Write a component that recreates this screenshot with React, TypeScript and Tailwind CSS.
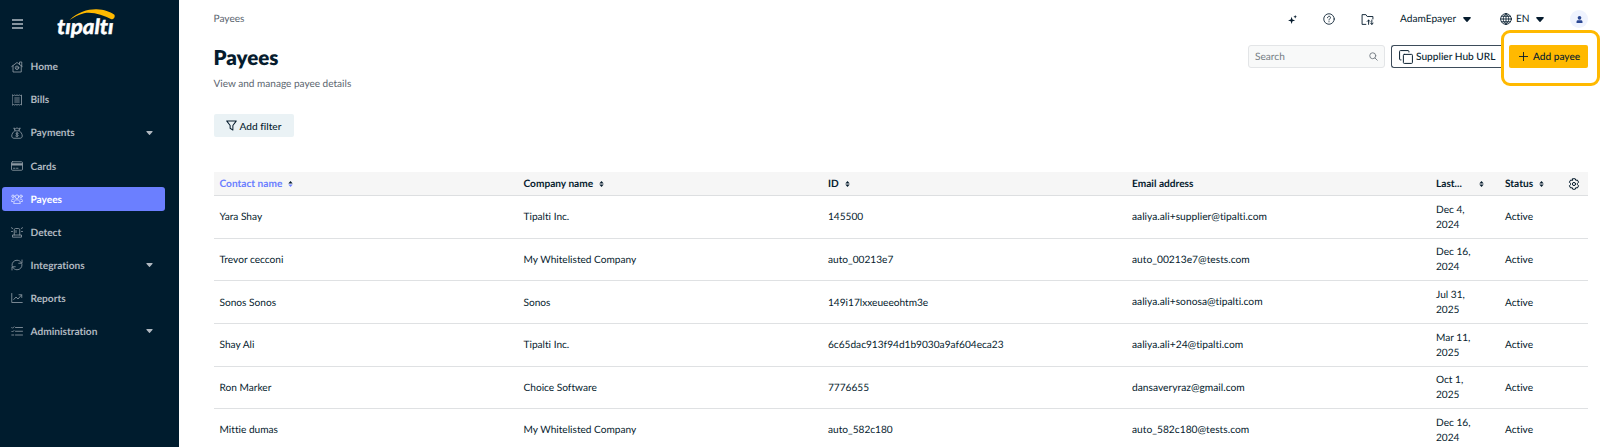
import React from "react";
import { clsx } from "clsx";

type IconProps = { className?: string };

interface NavEntry {
  label: string;
  icon: React.FC<IconProps>;
  expandable?: boolean;
  active?: boolean;
}

interface Payee {
  name: string;
  company: string;
  id: string;
  email: string;
  date: [string, string];
  status: string;
}

function Svg({ className, children }: { className?: string; children: React.ReactNode }) {
  return (
    <svg
      viewBox="0 0 24 24"
      fill="none"
      stroke="currentColor"
      strokeWidth="1.7"
      strokeLinecap="round"
      strokeLinejoin="round"
      className={clsx("shrink-0", className)}
    >
      {children}
    </svg>
  );
}

const HomeIcon = ({ className }: IconProps) => (
  <Svg className={className}>
    <path d="M1.500 11 12 3l10.500 8M4 9.500V22h16.500V9.500M17 6.500V2h4.500v8" />
    <circle cx="12" cy="13.500" r="3.500" />
    <path d="M12 12.500v2" />
  </Svg>
);

const BillsIcon = ({ className }: IconProps) => (
  <Svg className={className}>
    <path d="M3 2l2 1 2-1 2.500 1L12 2l2.500 1L17 2l2 1 2-1v20l-2-1-2 1-2.500-1-2.500 1-2.500-1L7 22l-2-1-2 1z" />
    <path d="M7.500 8h9M7.500 12h9M7.500 16h9" />
  </Svg>
);

const MoneyIcon = ({ className }: IconProps) => (
  <Svg className={className}>
    <path d="M8 7 5.500 2l4 1.500L12 1.500l2.500 2 4-1.500L16 7zM8 7C4 10 1.500 14 1.500 18c0 3 2 4.500 4.500 4.500h12c2.500 0 4.500-1.500 4.500-4.500 0-4-2.500-8-6.500-11" />
    <path d="M14.500 12.500c-1-1-4.500-1-4.500 1s4.500 1.500 4.500 3.500-3.500 2-5 1M12 10.500v9" />
  </Svg>
);

const CardIcon = ({ className }: IconProps) => (
  <Svg className={className}>
    <rect x="1" y="3.500" width="22" height="17" rx="2" />
    <path d="M1.500 7.500h21M1.500 9.500h21" strokeWidth="2.500" />
    <path d="M5 16.500h3M11 16.500h3" />
  </Svg>
);

const PeopleIcon = ({ className }: IconProps) => (
  <Svg className={className}>
    <circle cx="12" cy="7.500" r="3.700" />
    <path d="M5.500 20.500c0-4.500 2.500-7 6.500-7s6.500 2.500 6.500 7z" />
    <circle cx="4" cy="6.500" r="2.500" />
    <circle cx="20" cy="6.500" r="2.500" />
    <path d="M.500 16.500c0-3 1.500-5 5.500-4.500M23.500 16.500c0-3-1.500-5-5.500-4.500M2 17h2M20 17h2" />
  </Svg>
);

const AlarmIcon = ({ className }: IconProps) => (
  <Svg className={className}>
    <path d="M6.500 18V7.500c0-1.500 1-2.500 2.500-2.500h6c1.500 0 2.500 1 2.500 2.500V18M3 21.500V18h18v3.500z" />
    <path d="M10 9v4M.800 3.500 3.500 5M23.200 3.500 20.500 5M1 11h2M21 11h2" />
  </Svg>
);

const SyncIcon = ({ className }: IconProps) => (
  <Svg className={className}>
    <path d="M2 13C1.500 7 6 2.500 12 2.500c4 0 7 2 9 5.500M22 2v6.500h-6.500M22 11c.500 6-4 10.500-10 10.500-4 0-7-2-9-5.500M2 22v-6.500h6.500" />
  </Svg>
);

const ReportsIcon = ({ className }: IconProps) => (
  <Svg className={className}>
    <path d="M1.500 3v18h21M5.500 15l4.500-5 4 4 7-8M16 5.500h5.500V11" />
  </Svg>
);

const ChecklistIcon = ({ className }: IconProps) => (
  <Svg className={className}>
    <path d="M9 5h14M9 12.500h14M9 20h14M1.500 5l1.500 1.500L6 3.500M1.500 12.500 3 14l3-3M1.500 20h4" />
  </Svg>
);

function Caret({ className }: IconProps) {
  return (
    <svg viewBox="0 0 8 5" className={clsx("shrink-0", className)} fill="currentColor">
      <path d="M.900 0h6.200c.700 0 1 .700.500 1.200L4.500 4.700c-.300.300-.700.300-1 0L.400 1.200C-.100.700.200 0 .900 0z" />
    </svg>
  );
}

function SortIcon({ active }: { active?: boolean }) {
  return (
    <svg viewBox="0 0 6 8" className="-mt-[1px] h-[8px] w-[5px] shrink-0">
      <path d="M3 .300 5.600 3.300H.400z" fill="#061c2e" />
      <path d="M3 7.500 5.600 4.500H.400z" fill={active ? "#6b7fff" : "#061c2e"} />
    </svg>
  );
}

function Logo() {
  return (
    <svg viewBox="0 0 60 32" className="h-[32px] w-[60px]">
      <path d="M13.500 12C22 3.900 32 1 40.500 1.200c8 .300 13 2.300 17.900 5.500 1 2.300-.600 4.700-3 4.500C47 7 37 3.500 28 5.200c-5.500 1.200-10 3.800-14.500 6.800z" fill="#ffb900" />
      <text
        x="1"
        y="25.500"
        fill="#fff"
        fontSize="21"
        fontStyle="italic"
        fontWeight="700"
        fontFamily="Lato, sans-serif"
        stroke="#fff"
        strokeWidth="0.5"
        textLength="56.500"
        lengthAdjust="spacingAndGlyphs"
      >
        tıpaltı
      </text>
    </svg>
  );
}

const navItems: NavEntry[] = [
  { label: "Home", icon: HomeIcon },
  { label: "Bills", icon: BillsIcon },
  { label: "Payments", icon: MoneyIcon, expandable: true },
  { label: "Cards", icon: CardIcon },
  { label: "Payees", icon: PeopleIcon, active: true },
  { label: "Detect", icon: AlarmIcon },
  { label: "Integrations", icon: SyncIcon, expandable: true },
  { label: "Reports", icon: ReportsIcon },
  { label: "Administration", icon: ChecklistIcon, expandable: true },
];

const payees: Payee[] = [
  { name: "Yara Shay", company: "Tipalti Inc.", id: "145500", email: "aaliya.ali+supplier@tipalti.com", date: ["Dec 4,", "2024"], status: "Active" },
  { name: "Trevor cecconi", company: "My Whitelisted Company", id: "auto_00213e7", email: "auto_00213e7@tests.com", date: ["Dec 16,", "2024"], status: "Active" },
  { name: "Sonos Sonos", company: "Sonos", id: "149i17lxxeueeohtm3e", email: "aaliya.ali+sonosa@tipalti.com", date: ["Jul 31,", "2025"], status: "Active" },
  { name: "Shay Ali", company: "Tipalti Inc.", id: "6c65dac913f94d1b9030a9af604eca23", email: "aaliya.ali+24@tipalti.com", date: ["Mar 11,", "2025"], status: "Active" },
  { name: "Ron Marker", company: "Choice Software", id: "7776655", email: "dansaveryraz@gmail.com", date: ["Oct 1,", "2025"], status: "Active" },
  { name: "Mittie dumas", company: "My Whitelisted Company", id: "auto_582c180", email: "auto_582c180@tests.com", date: ["Dec 16,", "2024"], status: "Active" },
];

const gridCols = "grid shrink-0 grid-cols-[304px_304.500px_304px_304px_69px_1fr] pl-[6px]";

function Sidebar() {
  return (
    <aside className="flex h-[447px] w-[179px] shrink-0 flex-col bg-[#001c2e]">
      <div className="flex h-[50.500px] shrink-0 items-start pl-[12px]">
        <svg viewBox="0 0 11 10" className="mt-[19px] h-[10px] w-[11px]" stroke="#b3bcc5" strokeWidth="1.500">
          <path d="M0 1h11M0 5h11M0 9h11" />
        </svg>
        <div className="mt-[8px] ml-[33px]">
          <Logo />
        </div>
      </div>
      <nav className="flex flex-col">
        {navItems.map(({ label, icon: Icon, expandable, active }) => (
          <div key={label} className="flex h-[33.060px] items-center pl-[2px]">
            <div
              className={clsx(
                "flex h-[24px] w-[163px] items-center rounded-[3px] pr-[12px] pl-[9px]",
                active ? "bg-[#6b7fff] text-white" : "text-[#b0b8c0]"
              )}
            >
              <Icon className="h-[12px] w-[12px] opacity-80" />
              <span className="ml-[7.500px] flex-1 pt-[2px] font-bold">{label}</span>
              {expandable && <Caret className="h-[4px] w-[7px]" />}
            </div>
          </div>
        ))}
      </nav>
    </aside>
  );
}

function TopBar() {
  return (
    <div className="flex h-[38px] shrink-0 items-center">
      <span className="flex-1 pt-[2px] text-[#5c6670]">Payees</span>
      <svg viewBox="0 0 10 10" className="mr-[26px] h-[9px] w-[9px]" fill="#061c2e">
        <path d="M4 2 5 5l3 1-3 1-1 3-1-3-3-1 3-1zM8 0l.600 1.500L10 2l-1.400.600L8 4l-.600-1.400L6 2l1.400-.500z" />
      </svg>
      <Svg className="mr-[26px] h-[12px] w-[12px]">
        <circle cx="12" cy="12" r="10.500" />
        <path d="M9 9.500c0-4 6-4 6-.500 0 2.500-3 2.500-3 5M12 17.300v.400" />
      </Svg>
      <Svg className="mr-[26px] h-[13px] w-[13px]">
        <path d="M9 21H2V3h7l2.500 3.500H22V11" />
        <path d="M14 21v-8M11.500 15.500 14 13l2.500 2.500M20 13v8M17.500 18.500 20 21l2.500-2.500" />
      </Svg>
      <span className="w-[57px] pt-[2px]">AdamEpayer</span>
      <Caret className="mr-[29px] ml-[6px] h-[5px] w-[8px]" />
      <Svg className="mr-[4px] h-[12px] w-[12px]">
        <circle cx="12" cy="12" r="10.700" />
        <path d="M12 1v22M1 12h22M3 6.500h18M3 17.500h18M12 1C4.500 7 4.500 17 12 23M12 1c7.500 6 7.500 16 0 22" />
      </Svg>
      <span className="w-[14px] pt-[2px]">EN</span>
      <Caret className="mr-[26px] ml-[6px] h-[5px] w-[8px]" />
      <div className="flex h-[18px] w-[18px] items-center justify-center rounded-full bg-[#eff3fe]">
        <svg viewBox="0 0 8 8" className="h-[7px] w-[7px]" fill="#2b4793">
          <circle cx="4" cy="2.100" r="2.100" />
          <path d="M.600 7.900V6.500c0-1.300.900-1.700 2-1.700h2.800c1.100 0 2 .400 2 1.700v1.400z" />
        </svg>
      </div>
    </div>
  );
}

function PageHeader() {
  return (
    <div className="flex h-[76px] shrink-0 items-start justify-between">
      <div>
        <h1 className="mt-[7px] text-[20.500px] leading-[26px] font-extrabold">Payees</h1>
        <p className="mt-[6px] text-[10.050px] leading-[14px] text-[#5c6670]">View and manage payee details</p>
      </div>
      <div className="mt-[7px] flex items-center">
        <div className="flex h-[23px] w-[137px] items-center justify-between rounded-[3px] border border-[#e3e5e7] bg-[#f8f9f9] pr-[6px] pl-[6px] text-[#757d84]">
          <span className="pt-[2px]">Search</span>
          <Svg className="h-[9px] w-[9px]">
            <circle cx="10" cy="10" r="8" strokeWidth="2.500" />
            <path d="m16 16 6 6" strokeWidth="2.500" />
          </Svg>
        </div>
        <div className="ml-[6px] flex h-[23px] w-[111px] items-center rounded-l-[3px] border border-r-0 border-[#3d4c5a] pl-[7px]">
          <Svg className="h-[14px] w-[14px]">
            <rect x="7.500" y="7.500" width="15.500" height="15.500" rx="1.500" />
            <path d="M3.500 17H2.500A1.500 1.500 0 0 1 1 15.500v-13A1.500 1.500 0 0 1 2.500 1h13A1.500 1.500 0 0 1 17 2.500v1" />
          </Svg>
          <span className="ml-[3px] pt-[2px] font-medium whitespace-nowrap">Supplier Hub URL</span>
        </div>
        <div className="relative ml-[7px] flex h-[23px] w-[79px] items-center rounded-[2px] bg-[#ffb900] pl-[10px]">
          <Svg className="h-[9px] w-[9px]">
            <path d="M12 1v22M1 12h22" strokeWidth="2.400" />
          </Svg>
          <span className="ml-[5px] pt-[2px] font-medium whitespace-nowrap">Add payee</span>
          {/* callout ring */}
          <div className="absolute -top-[15px] -left-[8px] h-[56px] w-[99px] rounded-[9px] border-[3px] border-[#ffb900]" />
        </div>
      </div>
    </div>
  );
}

function PayeesTable() {
  return (
    <div className="mt-[35px] flex shrink-0 flex-col">
      <div className={clsx(gridCols, "h-[24px] items-center border-b border-[#dddfe1] bg-[#f6f6f6] pt-[2px] font-bold")}>
        <div className="flex items-center gap-[6px] text-[#6b7fff]">
          Contact name <SortIcon active />
        </div>
        <div className="flex items-center gap-[6px]">
          Company name <SortIcon />
        </div>
        <div className="flex items-center gap-[6px]">
          ID <SortIcon />
        </div>
        <div>Email address</div>
        <div className="flex items-center justify-between pr-[21px]">
          Last... <SortIcon />
        </div>
        <div className="flex items-center gap-[6px] pr-[8px]">
          Status <SortIcon />
          <Svg className="-mt-[1px] ml-auto h-[12px] w-[12px]">
            <path d="M9.500 1.500h5l1 3.200 3.200-.700 2.500 4.300L19 10.800v2.400l2.200 2.500-2.500 4.300-3.200-.700-1 3.200h-5l-1-3.200-3.200.700-2.500-4.300L5 13.200v-2.400L2.800 8.300 5.300 4l3.200.700z" strokeWidth="2" />
            <circle cx="12" cy="12" r="3.200" strokeWidth="2" />
          </Svg>
        </div>
      </div>
      {payees.map((p) => (
        <div key={p.id} className={clsx(gridCols, "h-[42.670px] items-center border-b border-[#dfe1e3] pt-[2px]")}>
          <span>{p.name}</span>
          <span>{p.company}</span>
          <span>{p.id}</span>
          <span className="text-[10.250px]">{p.email}</span>
          <span className="leading-[15px]">
            {p.date[0]}
            <br />
            {p.date[1]}
          </span>
          <span>{p.status}</span>
        </div>
      ))}
    </div>
  );
}

export default function App() {
  return (
    <div className="flex h-[448px] w-[1600px] overflow-hidden bg-white font-['Lato',sans-serif] text-[10.150px] text-[#061c2e] [font-variant-ligatures:none] [text-rendering:geometricPrecision]">
      <Sidebar />
      <main className="flex w-[1421px] flex-col pr-[12px] pl-[34.500px]">
        <TopBar />
        <PageHeader />
        <button className="flex h-[23px] w-[80px] shrink-0 items-center rounded-[2px] bg-[#eaf2f5] pl-[12px] font-medium">
          <Svg className="mr-[3px] h-[11px] w-[11px]">
            <path d="M1.500 2h21L15 12v10l-6-4v-6z" strokeWidth="2.200" />
          </Svg>
          <span className="pt-[2px]">Add filter</span>
        </button>
        <PayeesTable />
      </main>
    </div>
  );
}
